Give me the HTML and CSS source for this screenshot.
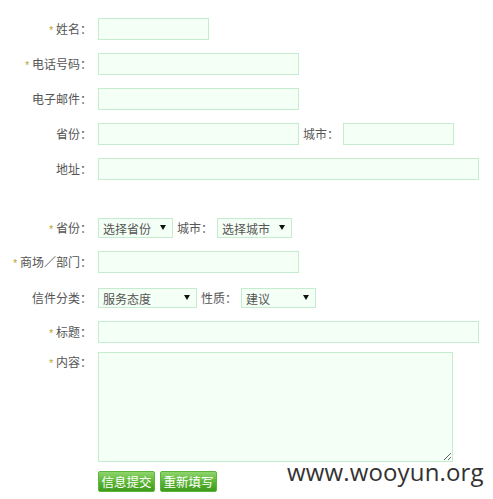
FILE: index.html
```html
<!DOCTYPE html>
<html lang="zh-CN">
<head>
<meta charset="utf-8">
<title>信件</title>
<link rel="stylesheet" href="styles.css">
</head>
<body>
<form class="form">
  <div class="row">
    <label class="lbl"><span class="req">*</span> 姓名：</label>
    <input class="inp inp-s" type="text">
  </div>
  <div class="row">
    <label class="lbl"><span class="req">*</span> 电话号码：</label>
    <input class="inp inp-m" type="text">
  </div>
  <div class="row">
    <label class="lbl">电子邮件：</label>
    <input class="inp inp-m" type="text">
  </div>
  <div class="row">
    <label class="lbl">省份：</label>
    <input class="inp inp-m" type="text">
    <span class="sub">城市：</span>
    <input class="inp inp-s" type="text">
  </div>
  <div class="row row-sep">
    <label class="lbl">地址：</label>
    <input class="inp inp-l" type="text">
  </div>

  <div class="row row-g12">
    <label class="lbl"><span class="req">*</span> 省份：</label>
    <span class="sel sel-s"><select><option>选择省份</option></select></span>
    <span class="sub">城市：</span>
    <span class="sel sel-s"><select><option>选择城市</option></select></span>
  </div>
  <div class="row row-g14">
    <label class="lbl"><span class="req">*</span> 商场／部门：</label>
    <input class="inp inp-m" type="text">
  </div>
  <div class="row row-g12">
    <label class="lbl">信件分类：</label>
    <span class="sel sel-m"><select><option>服务态度</option></select></span>
    <span class="sub">性质：</span>
    <span class="sel sel-s"><select><option>建议</option></select></span>
  </div>
  <div class="row row-g9">
    <label class="lbl"><span class="req">*</span> 标题：</label>
    <input class="inp inp-l" type="text">
  </div>
  <div class="row row-top row-g9">
    <label class="lbl lbl-top"><span class="req">*</span> 内容：</label>
    <textarea class="inp area"></textarea>
  </div>
  <div class="row btns">
    <button type="button" class="btn">信息提交</button>
    <button type="button" class="btn">重新填写</button>
  </div>
</form>
<div class="mark">www.wooyun.org</div>
</body>
</html>
```
FILE: styles.css
```css
html, body {
  margin: 0;
  padding: 0;
  background: #fff;
}
body {
  font-family: "Noto Sans CJK SC", "Noto Sans", sans-serif;
  font-size: 12px;
  color: #555;
  width: 493px;
  height: 499px;
  position: relative;
  overflow: hidden;
}
.form {
  display: block;
  padding-top: 18px;
}
.row {
  display: flex;
  align-items: center;
  height: 22px;
  margin-bottom: 13px;
  gap: 4px;
}
.row-sep { margin-bottom: 37px; }
.row-g12 { margin-bottom: 12px; }
.row-g14 { margin-bottom: 14px; }
.row-g9 { margin-bottom: 9px; }
.row-top {
  align-items: flex-start;
  height: auto;
}
.lbl {
  width: 92px;
  margin-right: 2px;
  text-align: right;
  white-space: nowrap;
  line-height: 22px;
  flex: none;
}
.lbl-top { line-height: 18px; padding-top: 1px; }
.req {
  color: #b9a63c;
  font-family: "Liberation Sans", sans-serif;
  font-size: 11px;
}
.sub {
  line-height: 22px;
  white-space: nowrap;
}
.inp {
  box-sizing: border-box;
  height: 22px;
  border: 1px solid #c6ecd0;
  background: #f4fff5;
  margin: 0;
  padding: 0 4px;
  font: inherit;
  color: #555;
  outline: none;
  flex: none;
}
.inp-s { width: 111px; }
.inp-m { width: 201px; }
.inp-l { width: 381px; }
.area {
  width: 355px;
  height: 110px;
  resize: both;
}
.sel {
  position: relative;
  display: inline-block;
  height: 20px;
  flex: none;
}
.sel select {
  -webkit-appearance: none;
  appearance: none;
  box-sizing: border-box;
  width: 100%;
  height: 20px;
  border: 1px solid #c6ecd0;
  background: #f4fff5;
  border-radius: 0;
  margin: 0;
  padding: 0 0 0 4px;
  font: inherit;
  font-size: 12px;
  color: #555;
  outline: none;
}
.sel::after {
  content: "";
  position: absolute;
  right: 7px;
  top: 7px;
  border-left: 3px solid transparent;
  border-right: 3px solid transparent;
  border-top: 5px solid #111;
  pointer-events: none;
}
.sel-s { width: 75px; }
.sel-m { width: 99px; }
.btns {
  height: 21px;
  gap: 5px;
  padding-left: 98px;
  margin: 0;
}
.btn {
  box-sizing: border-box;
  width: 57px;
  height: 21px;
  margin: 0;
  padding: 0;
  border: 1px solid #5cb53a;
  border-radius: 2px;
  background: linear-gradient(#8ed56c, #58b332 55%, #3f9b1c);
  color: #fff;
  font: inherit;
  font-size: 12.5px;
  line-height: 19px;
  cursor: pointer;
}
.mark {
  position: absolute;
  left: 287px;
  top: 456px;
  font-family: "Open Sans", sans-serif;
  font-size: 24px;
  letter-spacing: 0.15px;
  line-height: 32px;
  color: #333;
  white-space: nowrap;
}
```
